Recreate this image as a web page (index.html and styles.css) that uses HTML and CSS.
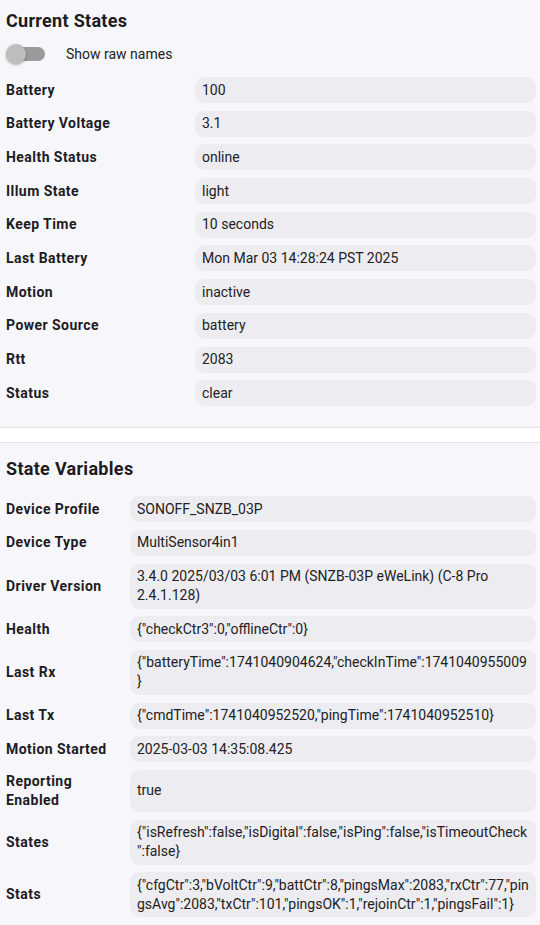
FILE: index.html
```html
<!DOCTYPE html>
<html>
<head>
<meta charset="utf-8">
<link rel="stylesheet" href="styles.css">
</head>
<body>
<section class="section s1">
  <h2 class="title t1">Current States</h2>
  <div class="toggle-row">
    <span class="switch"><span class="track"></span><span class="knob"></span></span>
    <span class="toggle-label">Show raw names</span>
  </div>
  <div class="rows r1">
    <div class="label">Battery</div><div class="value">100</div>
    <div class="label">Battery Voltage</div><div class="value">3.1</div>
    <div class="label">Health Status</div><div class="value">online</div>
    <div class="label">Illum State</div><div class="value">light</div>
    <div class="label">Keep Time</div><div class="value">10 seconds</div>
    <div class="label">Last Battery</div><div class="value">Mon Mar 03 14:28:24 PST 2025</div>
    <div class="label">Motion</div><div class="value">inactive</div>
    <div class="label">Power Source</div><div class="value">battery</div>
    <div class="label">Rtt</div><div class="value">2083</div>
    <div class="label">Status</div><div class="value">clear</div>
  </div>
</section>
<section class="section s2">
  <h2 class="title t2">State Variables</h2>
  <div class="rows r2">
    <div class="label">Device Profile</div><div class="value">SONOFF_SNZB_03P</div>
    <div class="label">Device Type</div><div class="value">MultiSensor4in1</div>
    <div class="label">Driver Version</div><div class="value">3.4.0 2025/03/03 6:01 PM (SNZB-03P eWeLink) (C-8 Pro 2.4.1.128)</div>
    <div class="label">Health</div><div class="value">{"checkCtr3":0,"offlineCtr":0}</div>
    <div class="label">Last Rx</div><div class="value">{"batteryTime":1741040904624,"checkInTime":1741040955009}</div>
    <div class="label">Last Tx</div><div class="value">{"cmdTime":1741040952520,"pingTime":1741040952510}</div>
    <div class="label">Motion Started</div><div class="value">2025-03-03 14:35:08.425</div>
    <div class="label">Reporting Enabled</div><div class="value">true</div>
    <div class="label">States</div><div class="value">{"isRefresh":false,"isDigital":false,"isPing":false,"isTimeoutCheck":false}</div>
    <div class="label">Stats</div><div class="value">{"cfgCtr":3,"bVoltCtr":9,"battCtr":8,"pingsMax":2083,"rxCtr":77,"pingsAvg":2083,"txCtr":101,"pingsOK":1,"rejoinCtr":1,"pingsFail":1}</div>
  </div>
</section>
</body>
</html>
```
FILE: styles.css
```css
html, body {
  margin: 0;
  padding: 0;
  background: #ffffff;
  font-family: Roboto, "Liberation Sans", sans-serif;
  font-size: 14px;
  color: #222222;
}

.section {
  background: #f7f7fb;
  padding: 0 4px 0 6px;
}

.s1 {
  border-bottom: 1px solid #e6e6ea;
  padding-top: 9.5px;
  padding-bottom: 21px;
}

.s2 {
  border-top: 1px solid #e6e6ea;
  margin-top: 14px;
  padding-top: 14.4px;
  padding-bottom: 8px;
}

.title {
  margin: 0;
  font-size: 18px;
  font-weight: 700;
  letter-spacing: 0.3px;
  line-height: 22px;
  color: #1c1b1f;
}

.toggle-row {
  display: flex;
  align-items: center;
  height: 20px;
  margin-top: 12.5px;
  margin-bottom: 13px;
}

.switch {
  position: relative;
  display: inline-block;
  width: 40px;
  height: 20px;
}

.track {
  position: absolute;
  left: 4px;
  top: 3px;
  width: 35px;
  height: 14px;
  border-radius: 7px;
  background: #9a9a9a;
}

.knob {
  position: absolute;
  left: 0;
  top: 0;
  width: 20px;
  height: 20px;
  border-radius: 50%;
  background: #bdbdbd;
  box-shadow: 0 1px 3px rgba(0, 0, 0, 0.3);
}

.toggle-label {
  margin-left: 20px;
  color: #222222;
  line-height: 19px;
}

.rows {
  display: grid;
  row-gap: 7.7px;
  column-gap: 8px;
}

.r1 {
  grid-template-columns: 181px 1fr;
}

.r2 {
  grid-template-columns: 116px 1fr;
  margin-top: 16.6px;
}

.label {
  font-weight: 700;
  letter-spacing: 0.45px;
  line-height: 19px;
  padding: 2px 0;
  align-self: center;
  color: #1c1b1f;
}

.value {
  display: flex;
  align-items: center;
  min-width: 0;
  background: #edecf1;
  border-radius: 9px;
  padding: 3.5px 7px;
  line-height: 19px;
  overflow-wrap: anywhere;
  color: #222222;
}
```
